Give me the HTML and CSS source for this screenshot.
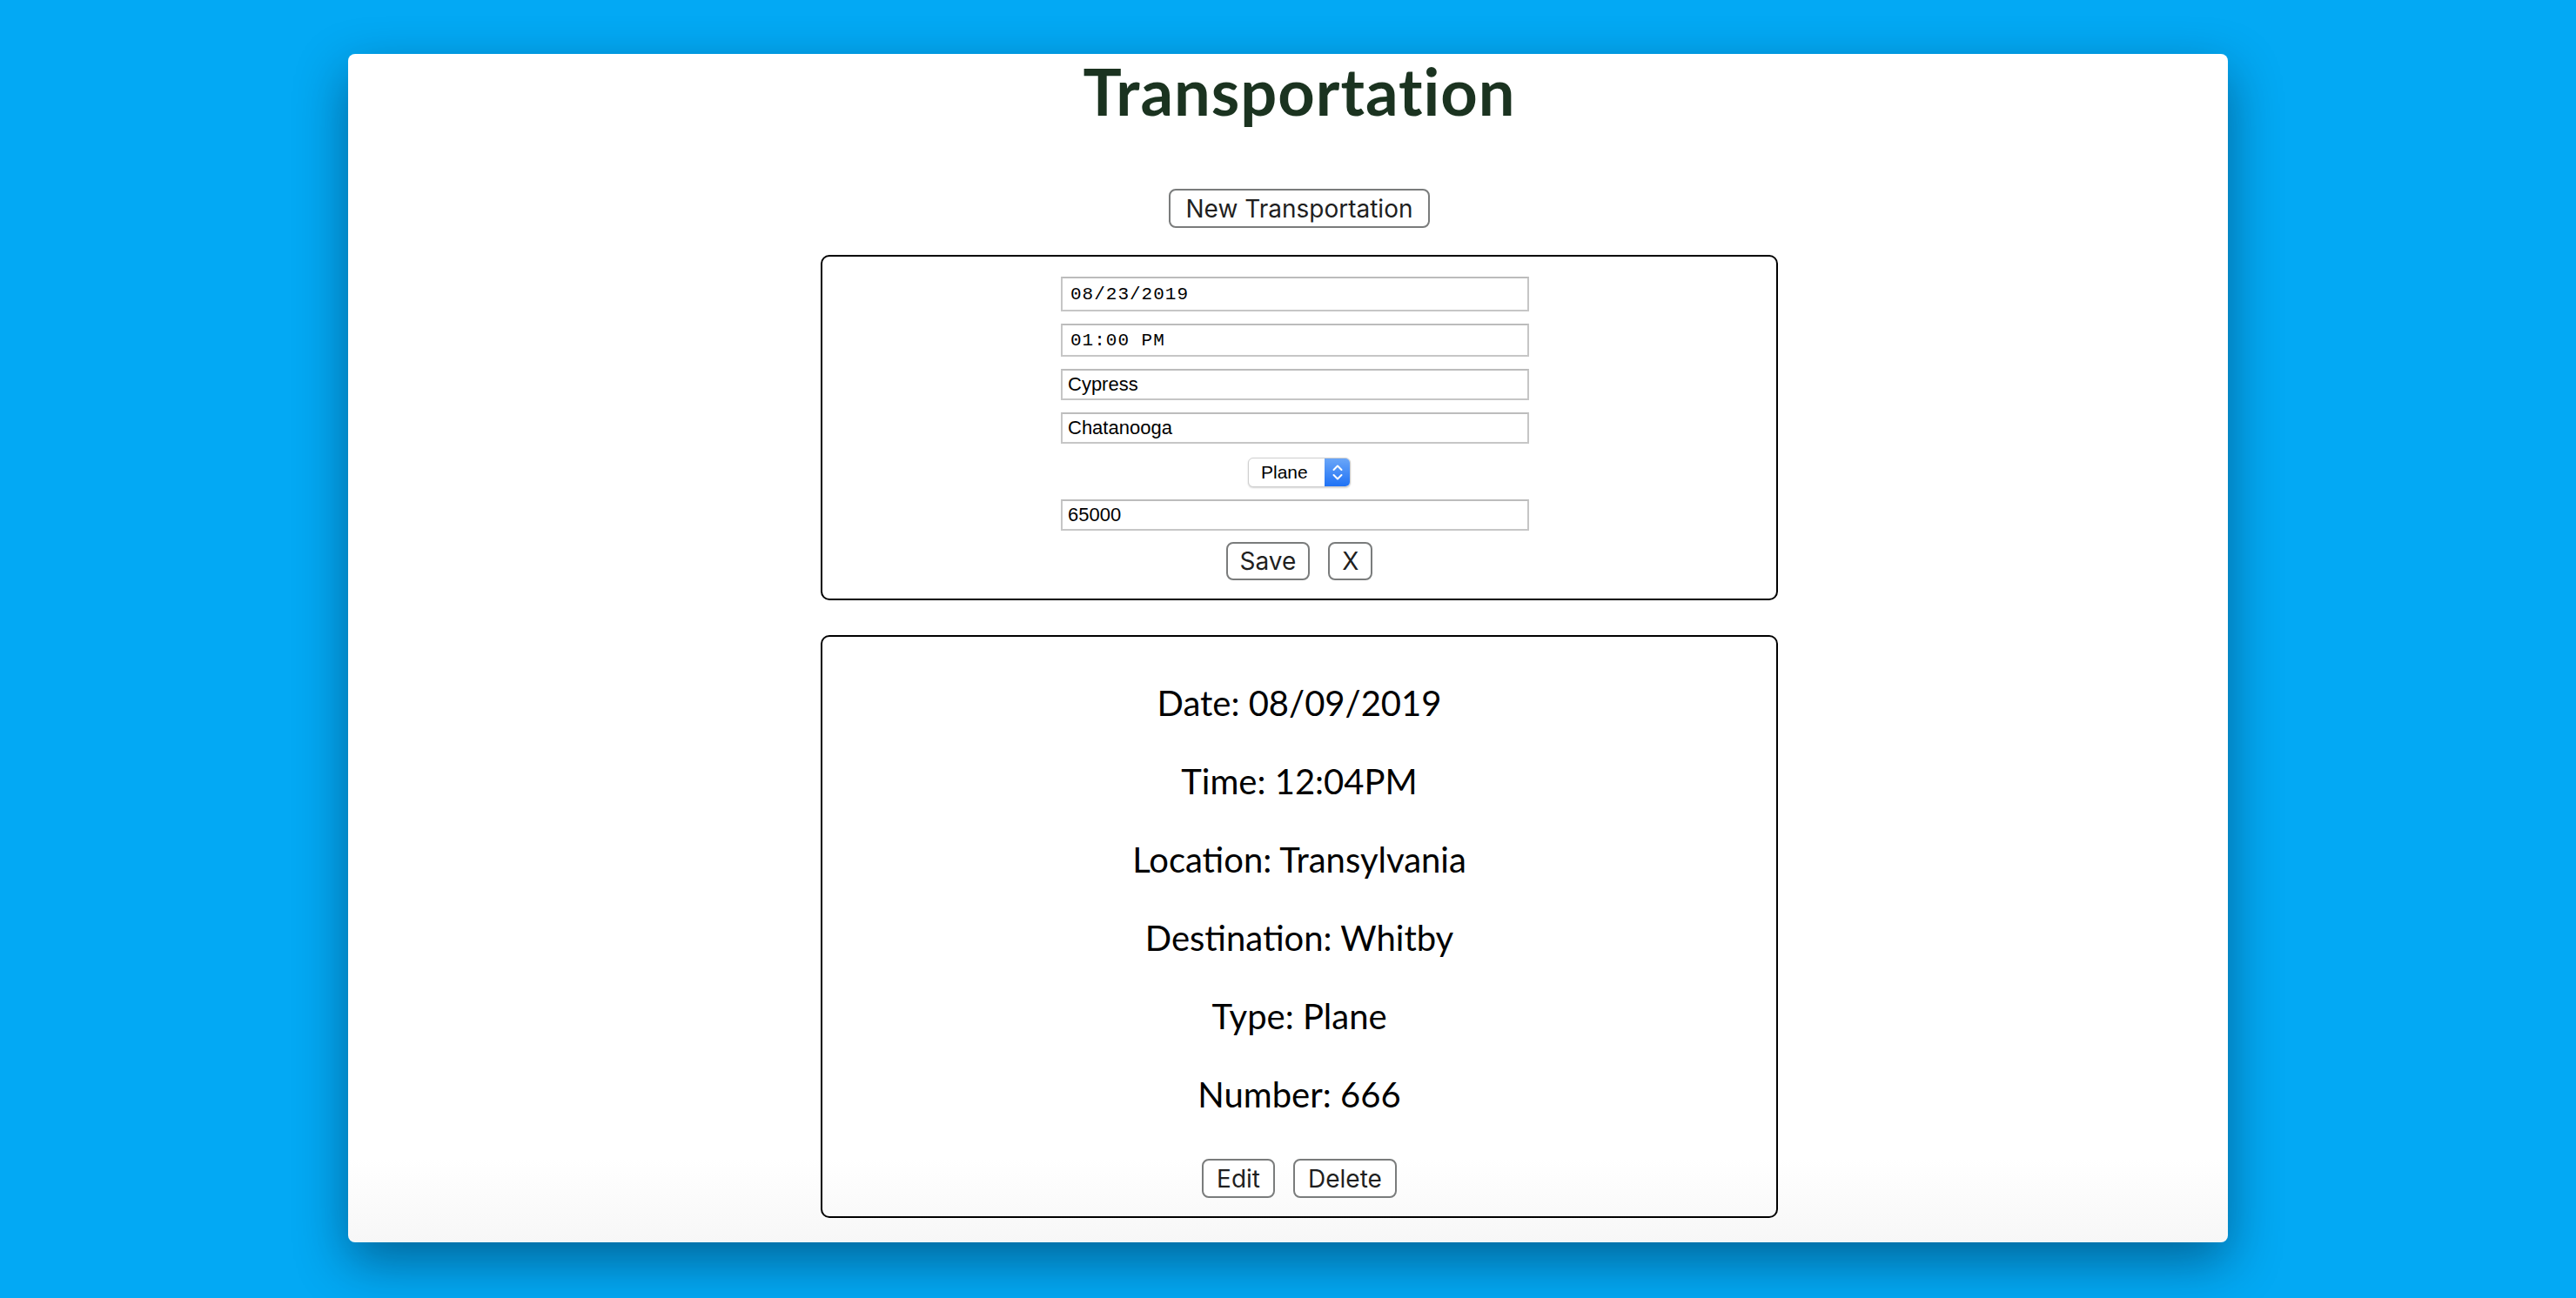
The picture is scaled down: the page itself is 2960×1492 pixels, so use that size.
FILE: index.html
```html
<!DOCTYPE html>
<html lang="en">
<head>
<meta charset="utf-8">
<title>Transportation</title>
<link rel="stylesheet" href="styles.css">
</head>
<body>
<main class="card">
  <h1 class="title">Transportation</h1>
  <div class="new-row">
    <button class="btn btn-new" type="button">New Transportation</button>
  </div>

  <form class="box form-box">
    <input class="field field-mono field-date" type="text" value="08/23/2019">
    <input class="field field-mono field-time" type="text" value="01:00 PM">
    <input class="field" type="text" value="Cypress">
    <input class="field" type="text" value="Chatanooga">
    <div class="select">
      <span class="select-value">Plane</span>
      <span class="select-arrow">
        <svg width="14" height="22" viewBox="0 0 14 22" aria-hidden="true">
          <path d="M2.5 8 L7 3.5 L11.5 8" fill="none" stroke="#fff" stroke-width="2" stroke-linecap="round" stroke-linejoin="round"/>
          <path d="M2.5 14 L7 18.5 L11.5 14" fill="none" stroke="#fff" stroke-width="2" stroke-linecap="round" stroke-linejoin="round"/>
        </svg>
      </span>
    </div>
    <input class="field" type="text" value="65000">
    <div class="actions form-actions">
      <button class="btn" type="button">Save</button>
      <button class="btn" type="button">X</button>
    </div>
  </form>

  <section class="box detail-box">
    <p class="detail">Date: 08/09/2019</p>
    <p class="detail">Time: 12:04PM</p>
    <p class="detail">Location: Transylvania</p>
    <p class="detail">Destination: Whitby</p>
    <p class="detail">Type: Plane</p>
    <p class="detail">Number: 666</p>
    <div class="actions detail-actions">
      <button class="btn" type="button">Edit</button>
      <button class="btn" type="button">Delete</button>
    </div>
  </section>
</main>
</body>
</html>
```

FILE: styles.css
```css
html, body {
  margin: 0;
  padding: 0;
}

body {
  background: #03a9f4;
  height: 1492px;
  overflow: hidden;
  font-family: Lato, "Noto Sans", sans-serif;
}

.card {
  box-sizing: border-box;
  width: 2160px;
  height: 1366px;
  margin: 62px auto 0;
  padding-left: 26px;
  background: linear-gradient(to bottom, #ffffff 0%, #ffffff 93%, #f7f7f7 100%);
  border-radius: 8px;
  box-shadow: 0 22px 60px rgba(0, 20, 40, 0.45);
  display: flex;
  flex-direction: column;
  align-items: center;
}

.title {
  margin: 0;
  font-family: Lato, "Noto Sans", sans-serif;
  font-weight: 700;
  font-size: 74px;
  line-height: 86px;
  letter-spacing: 1px;
  color: #1b3320;
  text-align: center;
}

.new-row {
  margin-top: 69px;
  display: flex;
  justify-content: center;
}

.btn {
  box-sizing: border-box;
  height: 45px;
  padding: 0 15px;
  background: #ffffff;
  border: 2px solid #7a7c7c;
  border-radius: 8px;
  font-family: Inter, "Liberation Sans", sans-serif;
  font-size: 28px;
  color: #1f1f1f;
  line-height: 1;
}

.btn-new {
  padding: 0 18px;
}

.box {
  box-sizing: border-box;
  width: 1100px;
  border: 2px solid #000;
  border-radius: 10px;
  display: flex;
  flex-direction: column;
  align-items: center;
}

.form-box {
  margin: 31px 0 0;
  padding: 23px 0 21px;
  gap: 14px;
}

.field {
  box-sizing: border-box;
  width: 538px;
  height: 36px;
  margin: 0 10px 0 0;
  padding: 0 6px;
  border: 2px solid #c6c6c6;
  border-top-color: #bcbcbc;
  border-radius: 0;
  background: #fff;
  font-family: "Liberation Sans", Arial, sans-serif;
  font-size: 22px;
  color: #000;
}

.field-mono {
  font-family: "Liberation Mono", "Courier New", monospace;
  font-size: 21px;
  letter-spacing: 1px;
  padding-left: 9px;
}

.field-date {
  height: 40px;
}

.field-time {
  height: 38px;
}

.select {
  box-sizing: border-box;
  width: 118px;
  height: 34px;
  margin-top: 2px;
  border: 1px solid #cfcfcf;
  border-radius: 6px;
  box-shadow: 0 1px 2px rgba(0, 0, 0, 0.18);
  background: #fff;
  display: flex;
  overflow: hidden;
}

.select-value {
  flex: 1;
  padding-left: 14px;
  font-family: "Liberation Sans", Arial, sans-serif;
  font-size: 21px;
  line-height: 32px;
  color: #000;
}

.select-arrow {
  width: 29px;
  background: linear-gradient(to bottom, #6aa6f8 0%, #1f72f5 100%);
  display: flex;
  align-items: center;
  justify-content: center;
}

.actions {
  display: flex;
  justify-content: center;
  gap: 21px;
}

.form-actions {
  margin-top: -1px;
}

.form-actions .btn {
  height: 44px;
  padding: 0 14px;
}

.detail-box {
  margin-top: 40px;
  padding: 51px 0 21px;
}

.detail {
  margin: 0;
  font-family: Lato, "Noto Sans", sans-serif;
  font-size: 40px;
  line-height: 50px;
  color: #000;
  text-align: center;
}

.detail + .detail {
  margin-top: 40px;
}

.detail-actions {
  margin-top: 49px;
}
```
